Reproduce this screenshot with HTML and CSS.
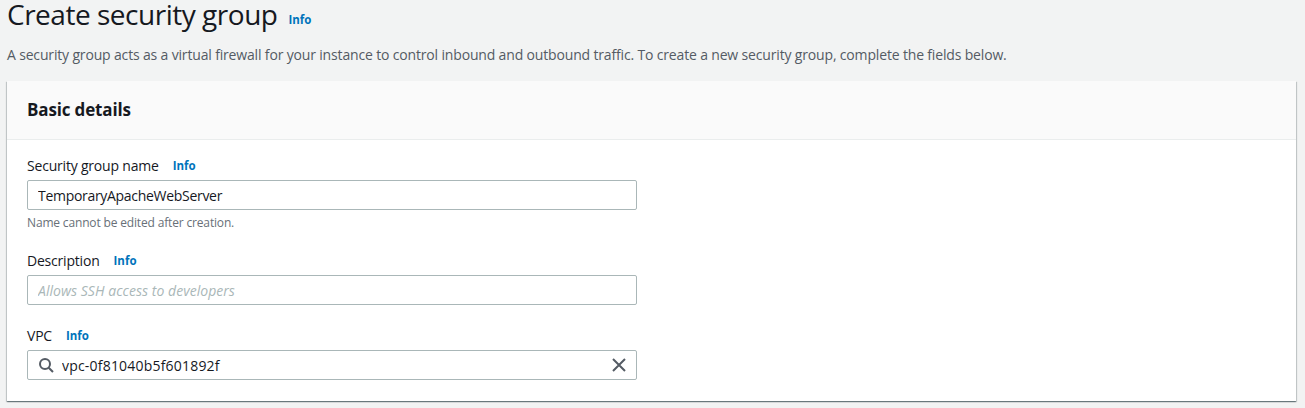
FILE: index.html
```html
<!DOCTYPE html>
<html lang="en">
<head>
    <meta charset="UTF-8">
    <meta name="viewport" content="width=device-width, initial-scale=1.0">
    <title>Create security group</title>
    <link rel="stylesheet" href="styles.css">
</head>
<body>
    <div class="page-title">
        <h1>Create security group</h1>
        <a class="info" href="#">Info</a>
    </div>
    <p class="intro">A security group acts as a virtual firewall for your instance to control inbound and outbound traffic. To create a new security group, complete the fields below.</p>

    <section class="panel">
        <h2 class="panel-head">Basic details</h2>
        <div class="panel-body">
            <div class="field">
                <div class="field-label"><label for="sgName">Security group name</label><a class="info" href="#">Info</a></div>
                <input class="text-input" id="sgName" type="text" value="TemporaryApacheWebServer">
                <div class="hint">Name cannot be edited after creation.</div>
            </div>
            <div class="field">
                <div class="field-label"><label for="sgDesc">Description</label><a class="info" href="#">Info</a></div>
                <input class="text-input" id="sgDesc" type="text" placeholder="Allows SSH access to developers">
            </div>
            <div class="field">
                <div class="field-label"><label for="sgVpc">VPC</label><a class="info" href="#">Info</a></div>
                <div class="search-box">
                    <svg class="icon-search" width="16" height="16" viewBox="0 0 16 16" fill="none" stroke="#545b64" stroke-width="2"><circle cx="7" cy="7" r="5"/><path d="M10.7 10.7 L15 15"/></svg>
                    <input class="search-input" id="sgVpc" type="text" value="vpc-0f81040b5f601892f">
                    <svg class="icon-clear" width="16" height="16" viewBox="0 0 16 16" fill="none" stroke="#545b64" stroke-width="2"><path d="M2 2 L14 14 M14 2 L2 14"/></svg>
                </div>
            </div>
        </div>
    </section>
</body>
</html>
```

FILE: styles.css
```css
body {
    background-color: #f2f3f3;
    color: #16191f;
    font-family: "Open Sans", "Noto Sans", Arial, sans-serif;
    font-size: 14px;
    margin: 0;
    padding: 0 9px 0 7px;
    height: 408px;
    overflow: hidden;
}
.page-title {
    display: flex;
    align-items: flex-start;
    height: 30px;
}
.page-title h1 {
    font-size: 28px;
    font-weight: 400;
    letter-spacing: -0.48px;
    line-height: 28px;
    margin: 0 11px 0 0;
}
.page-title .info {
    margin-left: 0;
    margin-top: 12px;
}
.info {
    color: #0073bb;
    font-size: 11.5px;
    font-weight: 700;
    text-decoration: none;
}
.intro {
    color: #545b64;
    font-size: 14px;
    letter-spacing: -0.162px;
    line-height: 20px;
    margin: 15px 0 16px;
}
.panel {
    background-color: #fff;
    box-shadow: 0 1px 1px 0 rgba(0, 28, 36, 0.4), 1px 1px 1px 0 rgba(0, 28, 36, 0.15), -1px 1px 1px 0 rgba(0, 28, 36, 0.15);
    height: 320px;
}
.panel-head {
    background-color: #fafafa;
    border-bottom: 1px solid #eaeded;
    font-size: 17px;
    font-weight: 700;
    letter-spacing: -0.15px;
    line-height: 58px;
    height: 58px;
    margin: 0;
    padding: 0 20px;
}
.panel-body {
    padding: 15px 20px 0;
}
.field {
    width: 610px;
    margin-bottom: 20px;
}
.field-label {
    display: flex;
    align-items: center;
    height: 20px;
    letter-spacing: -0.2px;
    margin-bottom: 5px;
}
.field-label .info {
    letter-spacing: 0;
    margin-left: 14px;
}
.text-input, .search-box {
    background-color: #fff;
    border: 1px solid #aab7b8;
    border-radius: 2px;
    box-sizing: border-box;
    color: #16191f;
    display: block;
    font-family: inherit;
    font-size: 14px;
    height: 30px;
    width: 100%;
}
.text-input {
    letter-spacing: -0.3px;
    padding: 0 10px;
}
.text-input::placeholder {
    color: #aab7b8;
    font-style: italic;
    letter-spacing: 0.04px;
}
.hint {
    color: #687078;
    font-size: 12px;
    letter-spacing: -0.16px;
    line-height: 14px;
    margin-top: 6px;
}
.search-box {
    display: flex;
    align-items: center;
    padding: 0 9px 0 10px;
}
.search-input {
    border: 0;
    color: #16191f;
    flex: 1;
    font-family: inherit;
    font-size: 14px;
    letter-spacing: 0.2px;
    margin-left: 8px;
    min-width: 0;
    outline: none;
    padding: 0;
}
```
